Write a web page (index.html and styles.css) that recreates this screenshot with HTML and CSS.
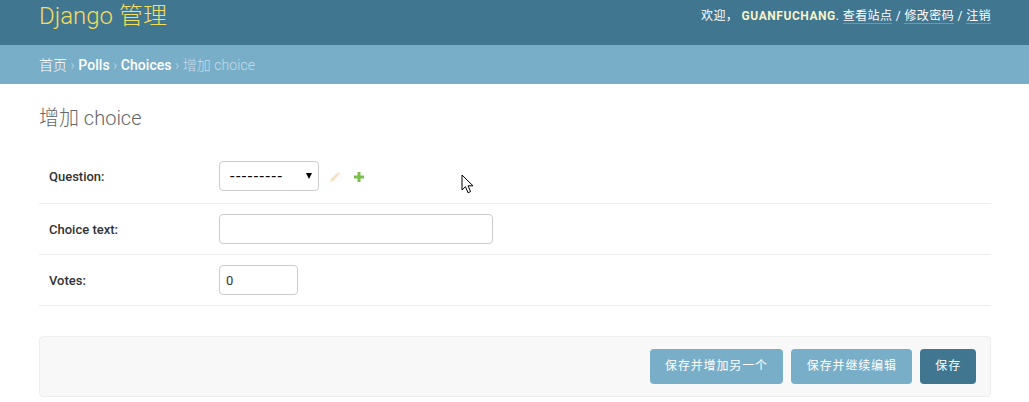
FILE: index.html
```
<!DOCTYPE html>
<html lang="zh">
<head>
<meta charset="utf-8">
<title>增加 choice</title>
<link rel="stylesheet" href="styles.css">
</head>
<body>
<header class="header">
  <div class="brand">Django 管理</div>
  <div class="tools">欢迎， <strong>GUANFUCHANG</strong>. <a href="#">查看站点</a> / <a href="#">修改密码</a> / <a href="#">注销</a></div>
</header>
<nav class="crumbs"><a href="#">首页</a> › <a href="#" class="crumb-strong">Polls</a> › <a href="#" class="crumb-strong">Choices</a> › 增加 choice</nav>
<main class="content">
  <h1 class="title">增加 choice</h1>
  <form class="form">
    <div class="row row-first">
      <label class="label">Question:</label>
      <div class="select"><span>---------</span><i class="caret"></i></div>
      <svg class="icon icon-edit" width="14" height="14" viewBox="0 0 14 14"><path d="M2 12l1-3 6-6 2 2-6 6z" fill="#f8dfc4"/><path d="M9 3l1.500-1.500 2 2L11 5z" fill="#f3eed6"/></svg>
      <svg class="icon icon-add" width="12" height="12" viewBox="0 0 12 12"><path d="M4.500 1h3v3.500H11v3H7.500V11h-3V7.500H1v-3h3.500z" fill="#7cbf4a"/></svg>
    </div>
    <div class="row">
      <label class="label">Choice text:</label>
      <input class="input input-text" type="text">
    </div>
    <div class="row">
      <label class="label">Votes:</label>
      <input class="input input-num" type="text" value="0">
    </div>
    <div class="submit-row">
      <button class="btn" type="button">保存并增加另一个</button>
      <button class="btn" type="button">保存并继续编辑</button>
      <button class="btn btn-default" type="button">保存</button>
    </div>
  </form>
</main>
<svg class="cursor" width="14" height="20" viewBox="0 0 14 20"><path d="M1 1v15l3.500-3.300 2.500 6 2.600-1.100-2.500-5.800H12z" fill="#fff" stroke="#000" stroke-width="1"/></svg>
</body>
</html>
```
FILE: styles.css
```
* { box-sizing: border-box; }
html, body { margin: 0; padding: 0; }
body {
  position: relative;
  height: 402px;
  overflow: hidden;
  background: #fff;
  color: #333;
  font-family: Roboto, "Noto Sans CJK SC", sans-serif;
  font-size: 14px;
}
.header {
  height: 45px;
  padding: 0 38px 0 39px;
  background: #417690;
  display: flex;
  justify-content: space-between;
  align-items: flex-start;
}
.brand {
  color: #f5dd5d;
  font-size: 24px;
  font-weight: 300;
  line-height: 32px;
}
.tools {
  color: #fff;
  font-size: 12px;
  line-height: 16px;
  margin-top: 8px;
  letter-spacing: .4px;
}
.tools strong { color: #f8f3c8; font-weight: 700; letter-spacing: .55px; }
.tools a { color: #fff; text-decoration: none; border-bottom: 1px solid rgba(255,255,255,.25); }
.crumbs {
  height: 39px;
  padding: 0 39px;
  background: #79aec8;
  color: #c4dce8;
  font-size: 14px;
  font-weight: 300;
  line-height: 41px;
  letter-spacing: .05px;
}
.crumbs a { color: #fff; text-decoration: none; }
.crumbs .crumb-strong { font-weight: 500; }
.content { padding: 21px 38px 0 39px; }
.title {
  margin: 0;
  color: #666;
  font-size: 20px;
  font-weight: 300;
  line-height: 26px;
}
.form { margin-top: 17px; }
.row {
  display: flex;
  align-items: center;
  height: 51px;
  padding-left: 10px;
  border-bottom: 1px solid #eee;
}
.row-first { height: 56px; }
.label {
  width: 170px;
  flex: none;
  color: #333;
  font-size: 13px;
  font-weight: 500;
}
.row-first .label { padding-top: 2px; }
.select {
  width: 100px;
  height: 30px;
  border: 1px solid #ccc;
  border-radius: 4px;
  padding: 0 10px;
  display: flex;
  align-items: center;
  justify-content: space-between;
  font-size: 16px;
  color: #000;
}
.select span { letter-spacing: 1.500px; padding-top: 2px; }
.caret {
  margin-right: -4px;
  width: 0;
  height: 0;
  border-left: 3.500px solid transparent;
  border-right: 3.500px solid transparent;
  border-top: 6px solid #000;
}
.icon { flex: none; margin-top: 2px; }
.icon-edit { margin-left: 9px; }
.icon-add { margin-left: 11px; }
.input {
  height: 30px;
  border: 1px solid #ccc;
  border-radius: 4px;
  padding: 0 6px;
  font: 13px Roboto, sans-serif;
  color: #333;
  background: #fff;
}
.input-text { width: 274px; }
.input-num { width: 79px; }
.submit-row {
  margin-top: 30px;
  height: 61px;
  padding: 12px 14px 12px;
  background: #f8f8f8;
  border: 1px solid #eee;
  border-radius: 4px;
  display: flex;
  justify-content: flex-end;
  gap: 8px;
}
.btn {
  height: 35px;
  padding: 0 15.500px;
  border: 0;
  border-radius: 4px;
  background: #79aec8;
  color: #fff;
  font: 12px/35px Roboto, "Noto Sans CJK SC", sans-serif;
  letter-spacing: .85px;
}
.btn-default { background: #417690; padding: 0 15px; }
.cursor { position: absolute; left: 461px; top: 174px; }
```
